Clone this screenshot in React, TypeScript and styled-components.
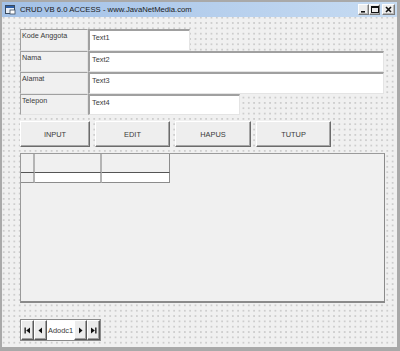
import React from 'react'
import styled, { createGlobalStyle } from 'styled-components'

const GlobalStyle = createGlobalStyle`
  html, body {
    margin: 0;
    padding: 0;
    background: #ffffff;
  }
  body {
    font-family: 'Liberation Sans', Arial, sans-serif;
  }
`

const Window = styled.div`
  width: 400px;
  height: 351px;
  box-sizing: border-box;
  background: #a9a9a9;
  padding: 2px 3px 4px 2px;
  display: flex;
  flex-direction: column;
`

const TitleBar = styled.div`
  height: 15px;
  flex: none;
  display: flex;
  align-items: center;
  padding: 0 2px 0 3px;
  background: linear-gradient(to right, #a3c1e7, #c6dbf2);
`

const TitleText = styled.span`
  margin-left: 4px;
  font-size: 7.7px;
  color: #1a1a1a;
  white-space: nowrap;
  flex: 1;
`

const CaptionButtons = styled.div`
  display: flex;
  align-items: center;
`

const CaptionButton = styled.div<{ $gap?: number; $wide?: boolean }>`
  width: ${(p) => (p.$wide ? 13 : 11)}px;
  height: 11px;
  box-sizing: border-box;
  margin-left: ${(p) => p.$gap ?? 0}px;
  background: #ededed;
  border: 1px solid #7a7a7a;
  border-top-color: #fdfdfd;
  border-left-color: #fdfdfd;
  box-shadow: inset -1px -1px 0 #b8b8b8;
  display: flex;
  align-items: center;
  justify-content: center;
`

const Client = styled.div`
  flex: 1;
  background-color: #f0f0f0;
  background-image: radial-gradient(circle, #a9a9a9 0.45px, transparent 0.8px);
  background-size: 5.33px 5.33px;
  background-position: -1px -2px;
  padding: 12px 0 0 18px;
  display: flex;
  flex-direction: column;
  align-items: flex-start;
`

const Fields = styled.div`
  display: flex;
  flex-direction: column;
`

const FieldRow = styled.div`
  display: flex;
  height: 21.5px;
`

const sunken = `
  box-sizing: border-box;
  border-top: 2px solid #a0a0a0;
  border-left: 2px solid #a0a0a0;
  border-right: 1px solid #e4e4e4;
  border-bottom: 1px solid #e4e4e4;
`

const FieldLabel = styled.div`
  ${sunken}
  border-left-width: 1px;
  border-top-width: 1px;
  width: 68px;
  background: #f0f0f0;
  font-size: 7.2px;
  color: #3a3a3a;
  padding: 1px 0 0 1px;
`

const TextBox = styled.div<{ $width: number }>`
  ${sunken}
  width: ${(p) => p.$width}px;
  background: #ffffff;
  font-size: 7.4px;
  color: #3a3a3a;
  padding: 2px 0 0 2px;
`

const ButtonRow = styled.div`
  display: flex;
  gap: 5px;
  margin-top: 6px;
`

const CommandButton = styled.div<{ $width: number }>`
  width: ${(p) => p.$width}px;
  height: 26px;
  box-sizing: border-box;
  background: #eeeeee;
  border: 1px solid #6b6b6b;
  border-top-color: #ffffff;
  border-left-color: #ffffff;
  box-shadow: inset -1px -1px 0 #a6a6a6;
  display: flex;
  align-items: center;
  justify-content: center;
  font-size: 7.4px;
  color: #3a3a3a;
`

const GridBox = styled.div`
  margin-top: 6px;
  width: 365px;
  height: 150px;
  box-sizing: border-box;
  background: #f0f0f0;
  border: 1px solid #9a9a9a;
  border-right-color: #8a8a8a;
  border-bottom: 2px solid #8a8a8a;
`

const GridTable = styled.div`
  display: grid;
  grid-template-columns: 14px 67px 68px;
  grid-template-rows: 19px 10px;
  width: 149px;
`

const GridCell = styled.div<{ $white?: boolean; $header?: boolean; $last?: boolean }>`
  box-sizing: border-box;
  background: ${(p) => (p.$white ? '#ffffff' : '#f0f0f0')};
  border-right: ${(p) => (p.$last ? '1px solid #8c8c8c' : '2px solid #b4b4b4')};
  border-bottom: ${(p) => (p.$header ? '1.5px solid #555555' : '1px solid #8c8c8c')};
`

const DataControl = styled.div`
  margin-top: 16px;
  display: flex;
  height: 22px;
  box-sizing: border-box;
  border: 1px solid #8a8a8a;
  background: #f0f0f0;
`

const NavButton = styled.div`
  width: 13px;
  box-sizing: border-box;
  border: 1px solid #5a5a5a;
  border-top-color: #ffffff;
  border-left-color: #ffffff;
  box-shadow: inset -1px -1px 0 #a0a0a0;
  background: #ececec;
  display: flex;
  align-items: center;
  justify-content: center;
`

const DataCaption = styled.div`
  width: 27px;
  background: #ffffff;
  font-size: 7.4px;
  color: #3a3a3a;
  display: flex;
  align-items: center;
  padding-left: 1px;
  box-sizing: border-box;
  overflow: hidden;
  white-space: nowrap;
`

const FormIcon = () => (
  <svg width="11" height="10" viewBox="0 0 11 10">
    <rect x="0.5" y="0.5" width="9" height="8" fill="#e8eef6" stroke="#3a4a5e" />
    <rect x="1" y="1" width="8" height="2" fill="#2c5ea8" />
    <rect x="5" y="5" width="5" height="4" fill="#ffffff" stroke="#3a4a5e" strokeWidth="0.8" />
  </svg>
)

const Glyph = ({ kind }: { kind: 'first' | 'prev' | 'next' | 'last' }) => (
  <svg width="7" height="7" viewBox="0 0 7 7">
    {kind === 'first' && (
      <>
        <rect x="0.5" y="0.5" width="1.3" height="6" fill="#111" />
        <polygon points="6,0.5 2.2,3.5 6,6.5" fill="#111" />
      </>
    )}
    {kind === 'prev' && <polygon points="5,0.5 1.5,3.5 5,6.5" fill="#111" />}
    {kind === 'next' && <polygon points="2,0.5 5.5,3.5 2,6.5" fill="#111" />}
    {kind === 'last' && (
      <>
        <polygon points="1,0.5 4.8,3.5 1,6.5" fill="#111" />
        <rect x="5.2" y="0.5" width="1.3" height="6" fill="#111" />
      </>
    )}
  </svg>
)

const fields = [
  { label: 'Kode Anggota', value: 'Text1', width: 102 },
  { label: 'Nama', value: 'Text2', width: 296 },
  { label: 'Alamat', value: 'Text3', width: 296 },
  { label: 'Telepon', value: 'Text4', width: 152 },
]

const buttons = [
  { text: 'INPUT', width: 70 },
  { text: 'EDIT', width: 75 },
  { text: 'HAPUS', width: 76 },
  { text: 'TUTUP', width: 75 },
]

const App: React.FC = () => {
  return (
    <>
      <GlobalStyle />
      <Window>
        <TitleBar>
          <FormIcon />
          <TitleText>CRUD VB 6.0 ACCESS - www.JavaNetMedia.com</TitleText>
          <CaptionButtons>
            <CaptionButton>
              <svg width="7" height="7" viewBox="0 0 7 7">
                <rect x="1" y="5" width="4" height="1.6" fill="#111" />
              </svg>
            </CaptionButton>
            <CaptionButton>
              <svg width="8" height="7" viewBox="0 0 8 7">
                <rect x="0.5" y="0.5" width="7" height="6" fill="none" stroke="#111" />
                <rect x="0.5" y="0.5" width="7" height="1.5" fill="#111" />
              </svg>
            </CaptionButton>
            <CaptionButton $gap={2} $wide>
              <svg width="7" height="7" viewBox="0 0 7 7">
                <path d="M1 1 L6 6 M6 1 L1 6" stroke="#111" strokeWidth="1.6" />
              </svg>
            </CaptionButton>
          </CaptionButtons>
        </TitleBar>
        <Client>
          <Fields>
            {fields.map((f) => (
              <FieldRow key={f.label}>
                <FieldLabel>{f.label}</FieldLabel>
                <TextBox $width={f.width}>{f.value}</TextBox>
              </FieldRow>
            ))}
          </Fields>
          <ButtonRow>
            {buttons.map((b) => (
              <CommandButton key={b.text} $width={b.width}>
                {b.text}
              </CommandButton>
            ))}
          </ButtonRow>
          <GridBox>
            <GridTable>
              <GridCell $header />
              <GridCell $header />
              <GridCell $header $last />
              <GridCell />
              <GridCell $white />
              <GridCell $white $last />
            </GridTable>
          </GridBox>
          <DataControl>
            <NavButton>
              <Glyph kind="first" />
            </NavButton>
            <NavButton>
              <Glyph kind="prev" />
            </NavButton>
            <DataCaption>Adodc1</DataCaption>
            <NavButton>
              <Glyph kind="next" />
            </NavButton>
            <NavButton>
              <Glyph kind="last" />
            </NavButton>
          </DataControl>
        </Client>
      </Window>
    </>
  )
}

export default App
